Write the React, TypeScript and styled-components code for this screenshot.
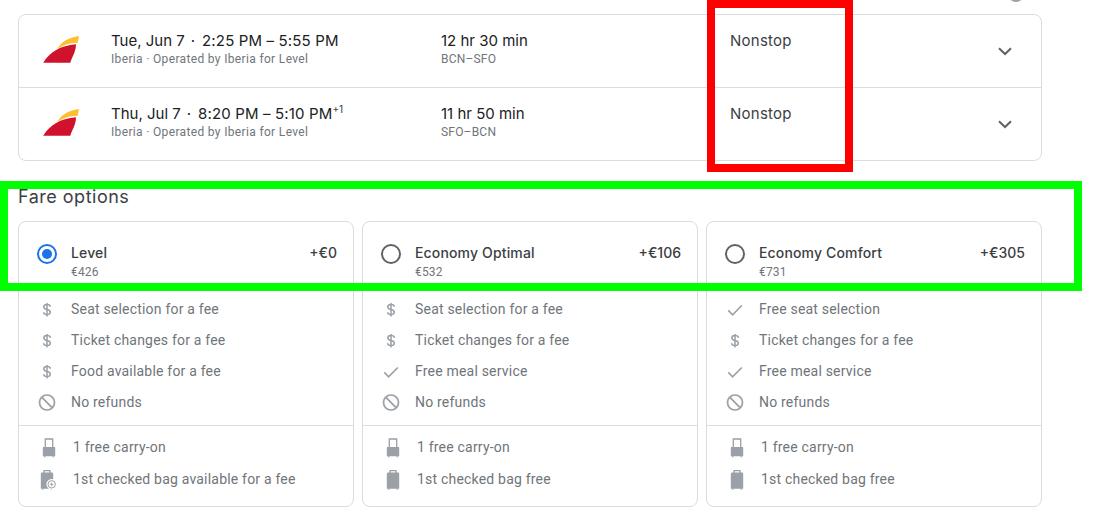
import { ReactElement } from 'react'
import styled, { createGlobalStyle } from 'styled-components'

type Perk = 'fee' | 'check' | 'none'

interface Fare {
  name: string
  price: string
  extra: string
  selected?: boolean
  perks: { icon: Perk; label: string }[]
  checkedBag: string
  checkedFree: boolean
}

const GlobalStyle = createGlobalStyle`
  html, body {
    margin: 0;
    padding: 0;
    background: #fff;
    overflow: hidden;
  }
  body {
    font-family: Roboto, "Liberation Sans", sans-serif;
  }
`

const Page = styled.div`
  position: relative;
  width: 1106px;
  height: 511px;
  padding: 14px 64px 0 18px;
  box-sizing: border-box;
  overflow: hidden;
`

const FlightCard = styled.div`
  border: 1px solid #dadce0;
  border-radius: 8px;
`

const FlightRow = styled.div`
  display: grid;
  grid-template-columns: 92px 330px 289px 1fr 72px;
  height: 72px;

  & + & {
    border-top: 1px solid #dadce0;
  }
`

const LogoCell = styled.div`
  padding: 15px 0 0 23px;
`

const TextCell = styled.div`
  padding-top: 16px;
`

const MainLine = styled.div`
  font-family: Inter, Roboto, sans-serif;
  font-size: 15px;
  line-height: 20px;
  color: #202124;
  white-space: nowrap;
`

const StopsLine = styled(MainLine)`
  color: #3c4043;
  letter-spacing: 0.25px;
`

const Dot = styled.span`
  margin: 0 7px 0 6px;
`

const Times = styled.span`
  letter-spacing: 0.15px;
`

const Plus = styled.sup`
  font-size: 10px;
  line-height: 0;
  color: #3c4043;
`

const SubLine = styled.div`
  font-size: 12px;
  line-height: 16px;
  letter-spacing: 0.2px;
  color: #70757a;
  white-space: nowrap;
`

const AirlineLine = styled(SubLine)`
  letter-spacing: 0.34px;
`

const ChevronCell = styled.div`
  display: flex;
  align-items: center;
  padding-left: 24px;
`

const Title = styled.h2`
  margin: 24px 0 12px;
  font-family: Inter, Roboto, sans-serif;
  font-size: 18px;
  line-height: 24px;
  font-weight: 400;
  letter-spacing: 0.5px;
  color: #3c4043;
`

const FareGrid = styled.div`
  display: grid;
  grid-template-columns: repeat(3, 336px);
  gap: 8px;
`

const FareCard = styled.div`
  height: 286px;
  box-sizing: border-box;
  border: 1px solid #dadce0;
  border-radius: 8px;
`

const FareHeader = styled.div`
  display: flex;
  height: 56px;
  padding: 21px 16px 0 18px;
  box-sizing: border-box;
  align-items: flex-start;
`

const Radio = styled.span<{ $on?: boolean }>`
  flex: none;
  width: 20px;
  height: 20px;
  margin: 1px 14px 0 0;
  box-sizing: border-box;
  border: 2px solid ${({ $on }) => ($on ? '#1a73e8' : '#5f6368')};
  border-radius: 50%;
  display: flex;
  align-items: center;
  justify-content: center;

  &::after {
    content: '';
    display: ${({ $on }) => ($on ? 'block' : 'none')};
    width: 10px;
    height: 10px;
    border-radius: 50%;
    background: #1a73e8;
  }
`

const FareName = styled.div`
  flex: 1;
  font-family: Inter, Roboto, sans-serif;
  font-size: 14px;
  font-weight: 500;
  line-height: 20px;
  letter-spacing: 0.15px;
  color: #3c4043;
`

const FarePrice = styled.div`
  margin-top: 1px;
  font-size: 12px;
  font-family: Roboto, sans-serif;
  font-weight: 400;
  line-height: 16px;
  color: #70757a;
`

const FareExtra = styled.div`
  font-family: Inter, Roboto, sans-serif;
  font-size: 14px;
  font-weight: 500;
  line-height: 20px;
  color: #3c4043;
`

const PerkList = styled.ul`
  list-style: none;
  margin: 0;
  padding: 15px 0 8px;
  border-bottom: 1px solid #dadce0;
`

const BagList = styled.ul`
  list-style: none;
  margin: 0;
  padding: 5px 0 0;
`

const Item = styled.li`
  display: flex;
  align-items: center;
  height: 31px;
  padding-left: 16px;
  font-size: 14px;
  letter-spacing: 0.2px;
  color: #70757a;
  white-space: nowrap;
`

const BagItem = styled(Item)`
  height: 32px;
`

const IconSlot = styled.span`
  flex: none;
  width: 24px;
  height: 24px;
  margin-right: 12px;
  display: flex;
`

const BagSlot = styled(IconSlot)`
  margin-left: 2px;
`

const Avatar = styled.div`
  position: absolute;
  left: 1008px;
  top: -14px;
  width: 16px;
  height: 16px;
  border-radius: 50%;
  background: #9aa0a6;
`

const RedFrame = styled.div`
  position: absolute;
  left: 707px;
  top: 0;
  width: 146px;
  height: 172px;
  box-sizing: border-box;
  border: 8px solid #ff0000;
`

const GreenFrame = styled.div`
  position: absolute;
  left: 0;
  top: 181px;
  width: 1082px;
  height: 110px;
  box-sizing: border-box;
  border: 8px solid #00ff00;
`

const IberiaLogo = (): ReactElement => (
  <svg width="40" height="40" viewBox="0 0 40 40">
    <path
      d="M1.2 32.700C8 22 18 15.500 34 14.300 34 22 30 27 28.300 32.700Z"
      fill="#d0122d"
    />
    <path
      d="M15.200 19.300C19 12 26 7.500 37 6L35.700 12.700C27 13 21 15 15.200 19.300Z"
      fill="#fcbf2e"
    />
  </svg>
)

const Chevron = (): ReactElement => (
  <svg width="24" height="24" viewBox="0 0 24 24">
    <path d="M6 9.300L12 15L18 9.300" fill="none" stroke="#5f6368" strokeWidth="2" />
  </svg>
)

const PerkIcon = ({ icon }: { icon: Perk }): ReactElement => {
  if (icon === 'fee') {
    return (
      <svg width="24" height="24" viewBox="0 0 24 24" fill="none" stroke="#9aa0a6" strokeWidth="1.500">
        <path d="M15.300 9.700C15.200 8.400 14 7.600 12 7.600 10 7.600 8.800 8.600 8.800 9.900 8.800 11.400 10 12 12 12.500 14.100 13 15.300 13.700 15.300 15.300 15.300 16.700 14 17.600 12 17.600 10 17.600 8.700 16.700 8.600 15.300" />
        <path d="M12 6V19.600" />
      </svg>
    )
  }
  if (icon === 'check') {
    return (
      <svg width="24" height="24" viewBox="0 0 24 24" fill="none" stroke="#9aa0a6" strokeWidth="1.600">
        <path d="M5.300 13.400L9.600 17.800L18.800 8.500" />
      </svg>
    )
  }
  return (
    <svg width="24" height="24" viewBox="0 0 24 24" fill="none" stroke="#9aa0a6" strokeWidth="1.700">
      <circle cx="12" cy="12.500" r="7.500" />
      <path d="M6.700 7.200L17.300 17.800" />
    </svg>
  )
}

const CarryOn = (): ReactElement => (
  <svg width="24" height="24" viewBox="0 0 24 24">
    <path d="M8.300 12V4H15.700V12" fill="none" stroke="#9aa0a6" strokeWidth="1.300" />
    <path d="M5.800 13C5.800 12.400 6.200 12 6.800 12H17.200C17.800 12 18.200 12.400 18.200 13V21.200H5.800Z" fill="#9aa0a6" />
    <path d="M7 21.200H8.500V22.200H7ZM15.500 21.200H17V22.200H15.500Z" fill="#9aa0a6" />
  </svg>
)

const CheckedBag = ({ free }: { free: boolean }): ReactElement => (
  <svg width="24" height="24" viewBox="0 0 24 24">
    <g transform={free ? undefined : 'translate(-2 0)'}>
      <path d="M9 6V3.700H15V6" fill="none" stroke="#9aa0a6" strokeWidth="1.300" />
      <path d="M5.800 7C5.800 6.100 6.400 5.500 7.300 5.500H16.700C17.600 5.500 18.200 6.100 18.200 7V21.700H5.800Z" fill="#9aa0a6" />
      <path d="M7 21.700H8.500V22.700H7ZM15.500 21.700H17V22.700H15.500Z" fill="#9aa0a6" />
    </g>
    {!free && (
      <>
        <circle cx="14.700" cy="17.300" r="5.300" fill="#fff" />
        <circle cx="14.700" cy="17.300" r="3.700" fill="none" stroke="#9aa0a6" strokeWidth="1" />
        <path d="M14.700 15.500V19.100M12.900 17.300H16.500" stroke="#9aa0a6" strokeWidth="0.900" />
      </>
    )}
  </svg>
)

const fares: Fare[] = [
  {
    name: 'Level',
    price: '€426',
    extra: '+€0',
    selected: true,
    perks: [
      { icon: 'fee', label: 'Seat selection for a fee' },
      { icon: 'fee', label: 'Ticket changes for a fee' },
      { icon: 'fee', label: 'Food available for a fee' },
      { icon: 'none', label: 'No refunds' },
    ],
    checkedBag: '1st checked bag available for a fee',
    checkedFree: false,
  },
  {
    name: 'Economy Optimal',
    price: '€532',
    extra: '+€106',
    perks: [
      { icon: 'fee', label: 'Seat selection for a fee' },
      { icon: 'fee', label: 'Ticket changes for a fee' },
      { icon: 'check', label: 'Free meal service' },
      { icon: 'none', label: 'No refunds' },
    ],
    checkedBag: '1st checked bag free',
    checkedFree: true,
  },
  {
    name: 'Economy Comfort',
    price: '€731',
    extra: '+€305',
    perks: [
      { icon: 'check', label: 'Free seat selection' },
      { icon: 'fee', label: 'Ticket changes for a fee' },
      { icon: 'check', label: 'Free meal service' },
      { icon: 'none', label: 'No refunds' },
    ],
    checkedBag: '1st checked bag free',
    checkedFree: true,
  },
]

const flights = [
  { day: 'Tue, Jun 7', hours: '2:25 PM – 5:55 PM', plus: false, time: '12 hr 30 min', route: 'BCN–SFO' },
  { day: 'Thu, Jul 7', hours: '8:20 PM – 5:10 PM', plus: true, time: '11 hr 50 min', route: 'SFO–BCN' },
]

const App = (): ReactElement => {
  return (
    <Page>
      <GlobalStyle />
      <FlightCard>
        {flights.map((flight) => (
          <FlightRow key={flight.route}>
            <LogoCell>
              <IberiaLogo />
            </LogoCell>
            <TextCell>
              <MainLine>
                {flight.day}
                <Dot>·</Dot>
                <Times>{flight.hours}</Times>
                {flight.plus && <Plus>+1</Plus>}
              </MainLine>
              <AirlineLine>Iberia · Operated by Iberia for Level</AirlineLine>
            </TextCell>
            <TextCell>
              <MainLine>{flight.time}</MainLine>
              <SubLine>{flight.route}</SubLine>
            </TextCell>
            <TextCell>
              <StopsLine>Nonstop</StopsLine>
            </TextCell>
            <ChevronCell>
              <Chevron />
            </ChevronCell>
          </FlightRow>
        ))}
      </FlightCard>
      <Title>Fare options</Title>
      <FareGrid>
        {fares.map((fare) => (
          <FareCard key={fare.name}>
            <FareHeader>
              <Radio $on={fare.selected} />
              <FareName>
                {fare.name}
                <FarePrice>{fare.price}</FarePrice>
              </FareName>
              <FareExtra>{fare.extra}</FareExtra>
            </FareHeader>
            <PerkList>
              {fare.perks.map((perk) => (
                <Item key={perk.label}>
                  <IconSlot>
                    <PerkIcon icon={perk.icon} />
                  </IconSlot>
                  {perk.label}
                </Item>
              ))}
            </PerkList>
            <BagList>
              <BagItem>
                <BagSlot>
                  <CarryOn />
                </BagSlot>
                1 free carry-on
              </BagItem>
              <BagItem>
                <BagSlot>
                  <CheckedBag free={fare.checkedFree} />
                </BagSlot>
                {fare.checkedBag}
              </BagItem>
            </BagList>
          </FareCard>
        ))}
      </FareGrid>
      <Avatar />
      <RedFrame />
      <GreenFrame />
    </Page>
  )
}

export default App
